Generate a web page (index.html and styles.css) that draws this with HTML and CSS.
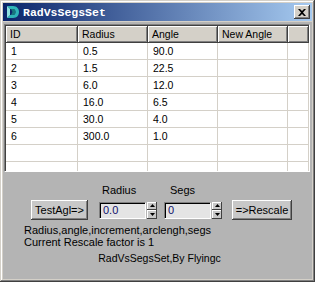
FILE: index.html
```html
<!DOCTYPE html>
<html>
<head>
<meta charset="utf-8">
<link rel="stylesheet" href="styles.css">
</head>
<body>
<div class="window">
  <div class="caption">
    <svg class="app-icon" width="16" height="16" viewBox="0 0 16 16">
      <path d="M3 2 H9 C13 2 15 5 15 8 C15 11 13 14 9 14 H3 L6 11 H9 C10.5 11 11.5 9.8 11.5 8 C11.5 6.2 10.5 5 9 5 H6 Z" fill="#2fb5b8"/>
      <path d="M9 5 C10.5 5 11.5 6.2 11.5 8 C11.5 9.8 10.5 11 9 11 H7 L8.5 8 L7 5 Z" fill="#17797e"/>
      <path d="M3 2 L6 5 L6 11 L3 14 Z" fill="#8fe0e0"/>
    </svg>
    <span class="title">RadVsSegsSet</span>
    <div class="close">
      <svg width="8" height="7" viewBox="0 0 8 7"><path d="M0 0h2l2 2 2-2h2L5 3.5 8 7H6L4 5 2 7H0L3 3.5z" fill="#000"/></svg>
    </div>
  </div>
  <div class="client">
    <div class="list">
      <div class="row head">
        <div class="cell">ID</div><div class="cell">Radius</div><div class="cell">Angle</div><div class="cell">New Angle</div><div class="cell"></div>
      </div>
      <div class="row"><div class="cell">1</div><div class="cell">0.5</div><div class="cell">90.0</div><div class="cell"></div><div class="cell"></div></div>
      <div class="row"><div class="cell">2</div><div class="cell">1.5</div><div class="cell">22.5</div><div class="cell"></div><div class="cell"></div></div>
      <div class="row"><div class="cell">3</div><div class="cell">6.0</div><div class="cell">12.0</div><div class="cell"></div><div class="cell"></div></div>
      <div class="row"><div class="cell">4</div><div class="cell">16.0</div><div class="cell">6.5</div><div class="cell"></div><div class="cell"></div></div>
      <div class="row"><div class="cell">5</div><div class="cell">30.0</div><div class="cell">4.0</div><div class="cell"></div><div class="cell"></div></div>
      <div class="row"><div class="cell">6</div><div class="cell">300.0</div><div class="cell">1.0</div><div class="cell"></div><div class="cell"></div></div>
      <div class="row"><div class="cell"></div><div class="cell"></div><div class="cell"></div><div class="cell"></div><div class="cell"></div></div>
      <div class="row filler"><div class="cell"></div><div class="cell"></div><div class="cell"></div><div class="cell"></div><div class="cell"></div></div>
    </div>
    <div class="panel">
      <div class="controls">
        <div class="btn btn-test">TestAgl=&gt;</div>
        <div class="group group-radius">
          <div class="label">Radius</div>
          <div class="spinner">
            <div class="edit">0.0</div>
            <div class="arrows">
              <div class="arrow"><svg width="5" height="3" viewBox="0 0 5 3"><path d="M2.5 0L5 3H0z" fill="#000"/></svg></div>
              <div class="arrow"><svg width="5" height="3" viewBox="0 0 5 3"><path d="M0 0H5L2.5 3z" fill="#000"/></svg></div>
            </div>
          </div>
        </div>
        <div class="group group-segs">
          <div class="label">Segs</div>
          <div class="spinner">
            <div class="edit">0</div>
            <div class="arrows">
              <div class="arrow"><svg width="5" height="3" viewBox="0 0 5 3"><path d="M2.5 0L5 3H0z" fill="#000"/></svg></div>
              <div class="arrow"><svg width="5" height="3" viewBox="0 0 5 3"><path d="M0 0H5L2.5 3z" fill="#000"/></svg></div>
            </div>
          </div>
        </div>
        <div class="btn btn-rescale">=&gt;Rescale</div>
      </div>
      <div class="info">
        <div class="line line1">Radius,angle,increment,arclengh,segs</div>
        <div class="line line2">Current Rescale factor is 1</div>
      </div>
      <div class="credit">RadVsSegsSet,By Flyingc</div>
    </div>
  </div>
</div>
</body>
</html>
```

FILE: styles.css
```css
* { box-sizing: border-box; }
html, body { margin: 0; padding: 0; }
body {
  width: 315px;
  height: 282px;
  overflow: hidden;
  font-family: "Liberation Sans", Arial, sans-serif;
  font-size: 10.5px;
  color: #000;
}
.window {
  width: 315px;
  height: 282px;
  background: #d4d0c8;
  padding: 3px 3px 3px 3px;
  display: flex;
  flex-direction: column;
  box-shadow: inset -1px -1px #404040, inset 1px 1px #d4d0c8, inset -2px -2px #808080, inset 2px 2px #fff;
}
.caption {
  height: 18px;
  flex: none;
  background: linear-gradient(to right, #0a246a, #a6caf0);
  display: flex;
  align-items: center;
  padding: 0 2px 0 1px;
}
.app-icon { flex: none; }
.title {
  font-family: "Liberation Mono", "Courier New", monospace;
  font-weight: bold;
  font-size: 11.5px;
  color: #fff;
  margin-left: 3px;
  flex: 1;
}
.close {
  width: 16px;
  height: 14px;
  background: #d4d0c8;
  box-shadow: inset -1px -1px #404040, inset 1px 1px #fff, inset -2px -2px #808080, inset 2px 2px #d4d0c8;
  display: flex;
  align-items: center;
  justify-content: center;
  padding-right: 1px;
}
.client {
  flex: 1;
  margin-top: 1px;
  background: #b4b4b4;
  display: flex;
  flex-direction: column;
}
.list {
  margin: 2px 2px 0 1px;
  height: 148px;
  background: #fff;
  border-top: 1px solid #808080;
  border-left: 1px solid #808080;
  border-right: 1px solid #fff;
  border-bottom: 1px solid #fff;
  box-shadow: inset 1px 1px #404040;
  padding: 1px 0 0 1px;
  display: flex;
  flex-direction: column;
  overflow: hidden;
}
.row {
  display: grid;
  grid-template-columns: 72px 70px 70px 70px 1fr;
  height: 17px;
  flex: none;
}
.row .cell {
  border-right: 1px solid #d4d0c8;
  border-bottom: 1px solid #d4d0c8;
  padding-left: 5px;
  line-height: 16px;
  white-space: nowrap;
}
.row.filler { flex: 1; }
.row.filler .cell { border-bottom: none; }
.row.head .cell {
  background: #d4d0c8;
  border: none;
  box-shadow: inset -1px -1px #404040, inset 1px 1px #fff, inset -2px -2px #808080;
  padding-left: 4px;
  line-height: 16px;
}
.panel {
  flex: 1;
  display: flex;
  flex-direction: column;
  padding: 12px 0 0 0;
}
.controls {
  display: flex;
  align-items: flex-end;
  padding-left: 28px;
}
.btn {
  height: 20px;
  background: #c8c8c8;
  box-shadow: inset -1px -1px #404040, inset 1px 1px #fff, inset -2px -2px #808080;
  display: flex;
  align-items: center;
  justify-content: center;
  font-size: 11px;
}
.btn-test { width: 57px; }
.btn-rescale { width: 60px; margin-left: 10px; margin-bottom: 0; }
.group { display: flex; flex-direction: column; }
.group-radius { margin-left: 11px; }
.group-segs { margin-left: 7px; }
.label { line-height: 13px; margin-bottom: 3px; font-size: 11px; }
.group-radius .label { padding-left: 3px; }
.group-segs .label { padding-left: 6px; }
.spinner {
  display: flex;
  align-items: center;
  height: 20px;
}
.edit {
  width: 47px;
  height: 17px;
  background: #e4e4e4;
  border-top: 1px solid #808080;
  border-left: 1px solid #808080;
  border-right: 1px solid #fff;
  border-bottom: 1px solid #fff;
  box-shadow: inset 1px 1px #000;
  padding-left: 3px;
  line-height: 15px;
  font-size: 11px;
  color: #10106a;
}
.arrows {
  width: 10px;
  height: 17px;
  margin-left: 1px;
  display: flex;
  flex-direction: column;
}
.arrow {
  flex: 1;
  background: #c8c8c8;
  box-shadow: inset -1px -1px #404040, inset 1px 1px #fff;
  display: flex;
  align-items: center;
  justify-content: center;
}
.info { padding-left: 21px; margin-top: 4px; font-size: 11px; }
.line { line-height: 12px; }
.credit { text-align: center; margin-top: 4px; line-height: 13px; padding-left: 4px; font-size: 10.5px; }
```
